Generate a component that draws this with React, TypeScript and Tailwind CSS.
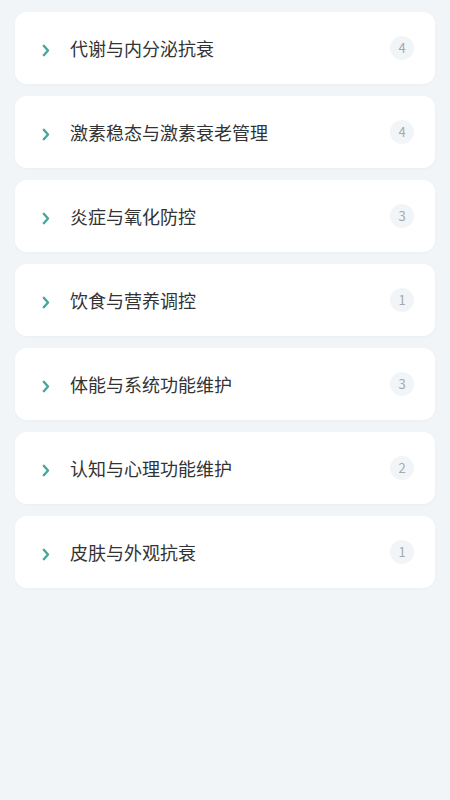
import React from 'react';

type Category = {
  name: string;
  count: number;
};

const categories: Category[] = [
  { name: '代谢与内分泌抗衰', count: 4 },
  { name: '激素稳态与激素衰老管理', count: 4 },
  { name: '炎症与氧化防控', count: 3 },
  { name: '饮食与营养调控', count: 1 },
  { name: '体能与系统功能维护', count: 3 },
  { name: '认知与心理功能维护', count: 2 },
  { name: '皮肤与外观抗衰', count: 1 },
];

function Chevron() {
  return (
    <svg className="h-[13px] w-[8px] shrink-0" viewBox="0 0 8 13" fill="none" aria-hidden>
      <path
        d="M1.8 1.8 L6 6.5 L1.8 11.2"
        stroke="#3fab9e"
        strokeWidth="2.4"
        strokeLinecap="round"
        strokeLinejoin="round"
      />
    </svg>
  );
}

export default function App() {
  return (
    <div
      className="min-h-[800px] w-full bg-[#f2f5f8] px-[15px] pt-[12px]"
      style={{ fontFamily: '"Noto Sans CJK SC", "Noto Sans", sans-serif' }}
    >
      <ul className="flex flex-col gap-[12px]">
        {categories.map((c) => (
          <li
            key={c.name}
            className="flex h-[72px] items-center rounded-[12px] bg-white pl-[27px] pr-[21px] shadow-[0_1px_3px_rgba(0,0,0,0.03)]"
          >
            <div className="mt-[5px]">
              <Chevron />
            </div>
            <span className="ml-[20px] flex-1 truncate text-[18px] text-[#333333]">{c.name}</span>
            <span className="flex h-[24px] w-[24px] items-center justify-center rounded-full bg-[#f2f5f8] text-[13px] text-[#a3a9b0]">
              {c.count}
            </span>
          </li>
        ))}
      </ul>
    </div>
  );
}
